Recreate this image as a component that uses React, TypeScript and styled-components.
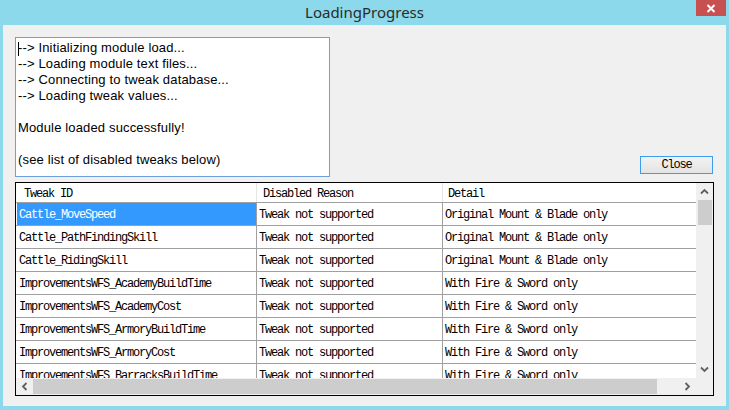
import React from "react";
import styled, { createGlobalStyle } from "styled-components";

const GlobalStyle = createGlobalStyle`
  html, body { margin: 0; padding: 0; width: 729px; height: 410px; overflow: hidden; }
  * { box-sizing: border-box; }
`;

const MONO = `"Liberation Mono", "DejaVu Sans Mono", monospace`;

const Window = styled.div`
  width: 729px;
  height: 410px;
  display: flex;
  flex-direction: column;
  background: #8bd9ea;
  padding: 0 3px 4px 3px;
`;

const TitleBar = styled.div`
  height: 25px;
  flex: none;
  display: grid;
  grid-template-columns: 1fr auto 1fr;
  align-items: start;
`;

const Title = styled.div`
  grid-column: 2;
  font-family: "Noto Sans", "Open Sans", sans-serif;
  font-size: 15px;
  line-height: 24px;
  color: #2b2b2b;
`;

const CloseX = styled.div`
  grid-column: 3;
  justify-self: end;
  width: 30px;
  height: 16px;
  background: #c75050;
  display: flex;
  align-items: center;
  justify-content: center;
`;

const Client = styled.div`
  flex: 1;
  background: #f0f0f0;
  padding: 12px 12px 10px 12px;
  display: flex;
  flex-direction: column;
  gap: 5px;
`;

const TopRow = styled.div`
  height: 140px;
  flex: none;
  display: flex;
  justify-content: space-between;
  align-items: flex-end;
`;

const LogBox = styled.div`
  position: relative;
  width: 315px;
  height: 140px;
  border: 1px solid #6c9fdc;
  background: #fff;
  padding: 2px 2px;
  font-family: "Liberation Sans", Arial, sans-serif;
  font-size: 13px;
  letter-spacing: 0.15px;
  color: #000;
`;

const LogLine = styled.div`
  height: 16px;
  line-height: 16px;
  white-space: nowrap;
`;

const Caret = styled.span`
  position: absolute;
  left: 2px;
  top: 4px;
  width: 1px;
  height: 14px;
  background: #000;
`;

const TableText = `
  font-family: ${MONO};
  font-size: 12px;
  letter-spacing: -1.2px;
  color: #000;
  white-space: nowrap;
  overflow: hidden;
`;

const CloseButton = styled.button`
  width: 73px;
  height: 18px;
  margin: 0 1px 3px 0;
  padding: 0;
  border: 1px solid #3c9cf0;
  background: linear-gradient(#f2f2f2, #e4e4e4);
  ${TableText}
`;

const ListFrame = styled.div`
  height: 214px;
  flex: none;
  border: 1px solid #000;
  background: #fff;
  display: grid;
  grid-template-columns: 1fr 17px;
  grid-template-rows: 1fr 17px;
`;

const Viewport = styled.div`
  overflow: hidden;
  min-width: 0;
  min-height: 0;
`;

const COLS = "241px 186px 1fr";

const HeaderRow = styled.div`
  display: grid;
  grid-template-columns: ${COLS};
  height: 20px;
  border-bottom: 1px solid #a0a0a0;
`;

const HeaderCell = styled.div<{ $pad: number }>`
  padding: 3px 0 0 ${(p) => p.$pad}px;
  border-right: 1px solid #e5e5e5;
  line-height: 16px;
  ${TableText}
  &:last-child { border-right: none; }
`;

const Row = styled.div`
  display: grid;
  grid-template-columns: ${COLS};
  height: 23px;
  border-bottom: 1px solid #a0a0a0;
`;

const Cell = styled.div<{ $selected?: boolean }>`
  padding: 2px 0 0 2px;
  border-right: 1px solid #a0a0a0;
  border-left: ${(p) => (p.$selected ? "1px solid #fff" : "none")};
  background: ${(p) => (p.$selected ? "#3399ff" : "transparent")};
  line-height: 20px;
  ${TableText}
  color: ${(p) => (p.$selected ? "#fff" : "#000")};
  &:first-child { padding-left: ${(p) => (p.$selected ? 2 : 3)}px; }
  &:last-child { border-right: none; }
`;

const VScroll = styled.div`
  background: #f0f0f0;
  display: flex;
  flex-direction: column;
`;

const HScroll = styled.div`
  background: #f0f0f0;
  display: flex;
`;

const ArrowBtn = styled.div`
  width: 17px;
  height: 17px;
  flex: none;
  display: flex;
  align-items: center;
  justify-content: center;
`;

const VThumb = styled.div`
  height: 25px;
  margin: 0 1px 0 2px;
  background: #cdcdcd;
`;

const VTrack = styled.div`
  flex: 1;
`;

const HThumb = styled.div`
  width: 624px;
  margin: 1px 0;
  background: #cdcdcd;
`;

const HTrack = styled.div`
  flex: 1;
`;

const Corner = styled.div`
  background: #f0f0f0;
`;

const Chevron = ({ dir }: { dir: "up" | "down" | "left" | "right" }) => {
  const rot = { up: 0, right: 90, down: 180, left: 270 }[dir];
  return (
    <svg width="9" height="9" viewBox="0 0 9 9" style={{ transform: `rotate(${rot}deg)` }}>
      <path d="M1 6.5 L4.5 3 L8 6.5" fill="none" stroke="#606060" strokeWidth="1.8" />
    </svg>
  );
};

const logLines = [
  "--> Initializing module load...",
  "--> Loading module text files...",
  "--> Connecting to tweak database...",
  "--> Loading tweak values...",
  "",
  "Module loaded successfully!",
  "",
  "(see list of disabled tweaks below)",
];

const MB = "Original Mount & Blade only";
const WFS = "With Fire & Sword only";
const NS = "Tweak not supported";

const rows = [
  { id: "Cattle_MoveSpeed", reason: NS, detail: MB },
  { id: "Cattle_PathFindingSkill", reason: NS, detail: MB },
  { id: "Cattle_RidingSkill", reason: NS, detail: MB },
  { id: "ImprovementsWFS_AcademyBuildTime", reason: NS, detail: WFS },
  { id: "ImprovementsWFS_AcademyCost", reason: NS, detail: WFS },
  { id: "ImprovementsWFS_ArmoryBuildTime", reason: NS, detail: WFS },
  { id: "ImprovementsWFS_ArmoryCost", reason: NS, detail: WFS },
  { id: "ImprovementsWFS_BarracksBuildTime", reason: NS, detail: WFS },
];

export default function App() {
  return (
    <>
      <GlobalStyle />
      <Window>
        <TitleBar>
          <Title>LoadingProgress</Title>
          <CloseX>
            <svg width="10" height="9" viewBox="0 0 10 9">
              <path d="M1.5 1 L8.5 8 M8.5 1 L1.5 8" stroke="#fff" strokeWidth="2" />
            </svg>
          </CloseX>
        </TitleBar>
        <Client>
          <TopRow>
            <LogBox>
              <Caret />
              {logLines.map((l, i) => (
                <LogLine key={i}>{l || "\u00a0"}</LogLine>
              ))}
            </LogBox>
            <CloseButton>Close</CloseButton>
          </TopRow>
          <ListFrame>
            <Viewport>
              <HeaderRow>
                <HeaderCell $pad={8}>Tweak ID</HeaderCell>
                <HeaderCell $pad={6}>Disabled Reason</HeaderCell>
                <HeaderCell $pad={5}>Detail</HeaderCell>
              </HeaderRow>
              {rows.map((r, i) => (
                <Row key={r.id}>
                  <Cell $selected={i === 0}>{r.id}</Cell>
                  <Cell>{r.reason}</Cell>
                  <Cell>{r.detail}</Cell>
                </Row>
              ))}
            </Viewport>
            <VScroll>
              <ArrowBtn><Chevron dir="up" /></ArrowBtn>
              <VThumb />
              <VTrack />
              <ArrowBtn><Chevron dir="down" /></ArrowBtn>
            </VScroll>
            <HScroll>
              <ArrowBtn><Chevron dir="left" /></ArrowBtn>
              <HThumb />
              <HTrack />
              <ArrowBtn><Chevron dir="right" /></ArrowBtn>
            </HScroll>
            <Corner />
          </ListFrame>
        </Client>
      </Window>
    </>
  );
}
